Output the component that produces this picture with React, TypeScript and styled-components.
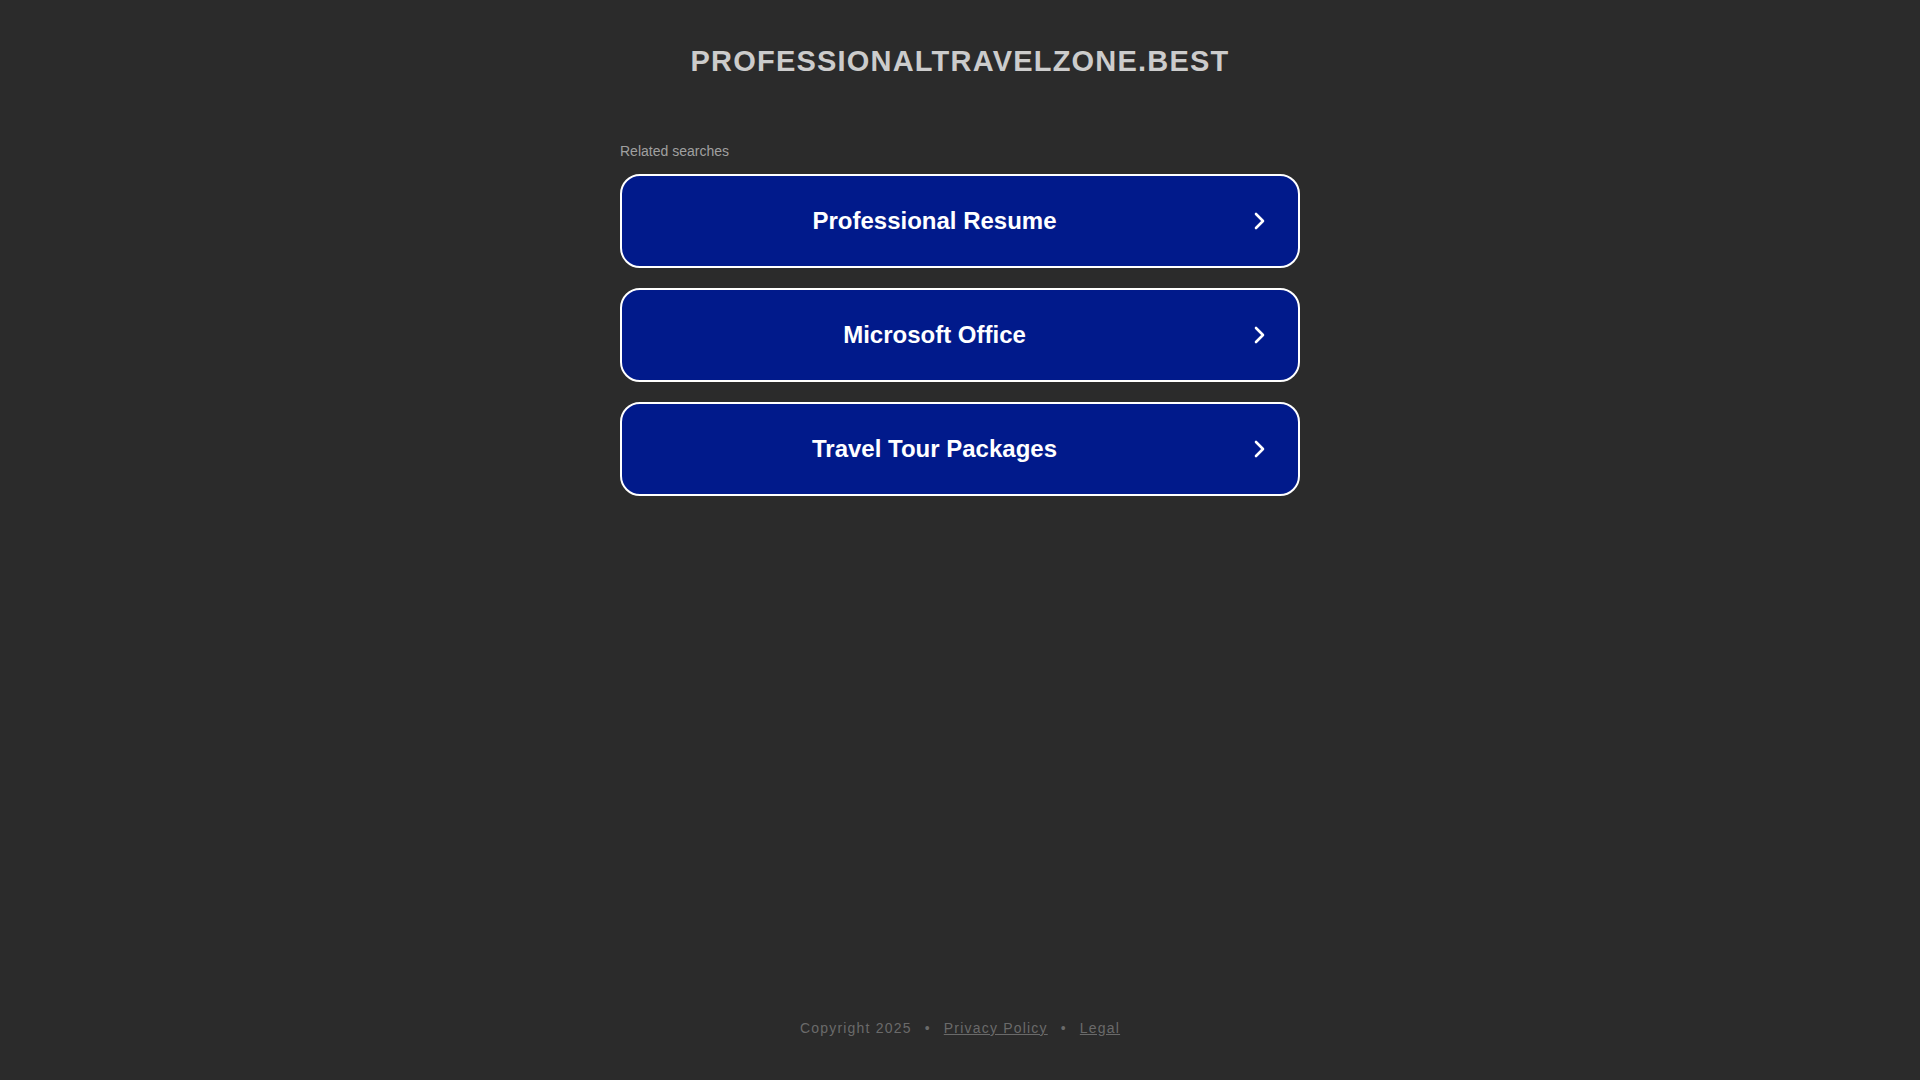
import React from "react";
import styled, { createGlobalStyle } from "styled-components";

const GlobalStyle = createGlobalStyle`
  html, body {
    margin: 0;
    padding: 0;
    background: #2b2b2b;
    font-family: Arial, "Liberation Sans", sans-serif;
  }
`;

const Page = styled.div`
  display: flex;
  flex-direction: column;
  align-items: center;
  min-height: 100vh;
  box-sizing: border-box;
`;

const Domain = styled.h1`
  margin: 44px 0 0;
  color: #cccccc;
  font-size: 29px;
  line-height: 34px;
  font-weight: bold;
  letter-spacing: 1.2px;
  text-transform: uppercase;
`;

const Searches = styled.div`
  width: 680px;
  margin-top: 65px;
`;

const Label = styled.div`
  color: #a0a0a0;
  font-size: 14px;
  line-height: 16px;
  margin-bottom: 15px;
`;

const List = styled.div`
  display: flex;
  flex-direction: column;
  gap: 20px;
`;

const Item = styled.a`
  display: flex;
  align-items: center;
  height: 94px;
  box-sizing: border-box;
  border: 2px solid #ffffff;
  border-radius: 20px;
  background: #011a8b;
  color: #ffffff;
  text-decoration: none;
  padding: 0 27px 0 0;
  cursor: pointer;
`;

const ItemText = styled.span`
  flex: 1;
  text-align: center;
  font-size: 24px;
  font-weight: bold;
`;

const Chevron = styled.svg`
  width: 24px;
  height: 24px;
  flex: none;
`;

const Footer = styled.footer`
  margin-top: auto;
  padding-bottom: 44px;
  color: #6a6a6a;
  font-size: 14px;
  letter-spacing: 1.2px;
`;

const FooterLink = styled.a`
  color: #6a6a6a;
  text-decoration: underline;
`;

const Dot = styled.span`
  margin: 0 13px;
`;

const items = ["Professional Resume", "Microsoft Office", "Travel Tour Packages"];

export default function App() {
  return (
    <>
      <GlobalStyle />
      <Page>
        <Domain>professionaltravelzone.best</Domain>
        <Searches>
          <Label>Related searches</Label>
          <List>
            {items.map((t) => (
              <Item key={t}>
                <ItemText>{t}</ItemText>
                <Chevron viewBox="0 0 24 24" fill="none" stroke="#fff" strokeWidth="2.6" strokeLinecap="round" strokeLinejoin="round">
                  <path d="M9 5l7 7-7 7" />
                </Chevron>
              </Item>
            ))}
          </List>
        </Searches>
        <Footer>
          Copyright 2025<Dot>•</Dot>
          <FooterLink>Privacy Policy</FooterLink>
          <Dot>•</Dot>
          <FooterLink>Legal</FooterLink>
        </Footer>
      </Page>
    </>
  );
}
